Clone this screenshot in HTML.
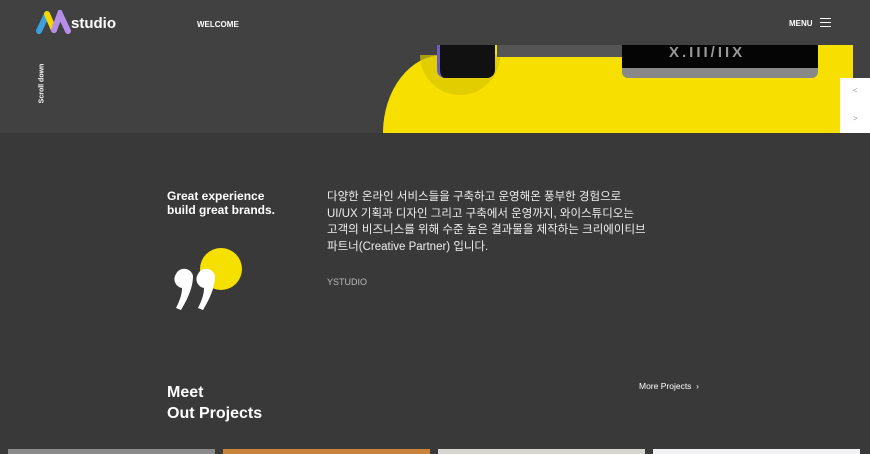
<!DOCTYPE html>
<html><head><meta charset="utf-8"><style>
*{margin:0;padding:0;box-sizing:border-box}
body{width:870px;height:454px;overflow:hidden;background:#393939;font-family:"Liberation Sans","Noto Sans CJK KR",sans-serif;color:#fff;position:relative}
.abs{position:absolute}
</style></head><body>
<div class="abs" style="left:0;top:0;width:870px;height:133px;background:#414141"></div>
<!-- hero yellow -->
<div class="abs" style="left:383px;top:55px;width:470px;height:78px;background:#f7e000;border-top-left-radius:60px 78px"></div>
<div class="abs" style="left:495px;top:45px;width:358px;height:20px;background:#f7e000"></div>
<div class="abs" style="left:420px;top:55px;width:80px;height:40px;background:#d8c400;border-radius:0 0 40px 40px;opacity:.7"></div>
<div class="abs" style="left:497px;top:45px;width:125px;height:12px;background:#555"></div>
<div class="abs" style="left:437px;top:45px;width:58px;height:33px;background:#111;border-radius:0 0 8px 8px;border-left:3px solid #6a5fc0"></div>
<div class="abs" style="left:622px;top:45px;width:196px;height:25px;background:#050505"></div>
<div class="abs" style="left:622px;top:68px;width:196px;height:10px;background:#888;border-radius:0 0 6px 6px"></div>
<div class="abs" style="left:669px;top:44px;font:bold 15px 'Liberation Sans';color:#999;letter-spacing:3px">X.III/IIX</div>
<div class="abs" style="left:840px;top:78px;width:30px;height:55px;background:#fff"></div>
<div class="abs" style="left:853px;top:86px;font-size:8px;color:#999">&lt;</div>
<div class="abs" style="left:853px;top:114px;font-size:8px;color:#999">&gt;</div>
<!-- header -->
<div class="abs" style="left:0;top:0;width:870px;height:45px;background:#414141"></div>
<svg class="abs" style="left:36px;top:10px" width="36" height="24" viewBox="0 0 36 24">
<path d="M3 21 L11 4" stroke="#3aa0e0" stroke-width="6" stroke-linecap="round"/>
<path d="M11 4 L18 20" stroke="#f5d800" stroke-width="6" stroke-linecap="round"/>
<path d="M18 20 L24 4 L32 21" stroke="#b48ee8" stroke-width="6" stroke-linecap="round" fill="none"/>
</svg>
<div class="abs" style="left:71px;top:15px;font:bold 15px 'Liberation Sans';color:#fff">studio</div>
<div class="abs" style="left:197px;top:20px;font:bold 8px 'Liberation Sans'">WELCOME</div>
<div class="abs" style="left:789px;top:19px;font:bold 8px 'Liberation Sans'">MENU</div>
<div class="abs" style="left:820px;top:18px;width:11px;height:9px;border-top:1px solid #fff;border-bottom:1px solid #fff"></div>
<div class="abs" style="left:820px;top:22px;width:11px;height:1px;background:#fff"></div>
<div class="abs" style="left:12px;top:80px;width:60px;text-align:center;white-space:nowrap;font:bold 7px 'Liberation Sans';transform:rotate(-90deg)">Scroll down</div>
<!-- section -->
<div class="abs" style="left:167px;top:189px;font:bold 12px/14px 'Liberation Sans'">Great experience<br>build great brands.</div>
<div class="abs" style="left:200px;top:248px;width:42px;height:42px;border-radius:50%;background:#f5e000"></div>
<svg class="abs" style="left:174px;top:264px" width="46" height="48" viewBox="0 0 46 48">
<path d="M2 10 a9 9 0 0 1 17 2 c0 12 -6 24 -12 34 l-5 -2 c4 -8 6 -14 6 -20 a9 9 0 0 1 -6 -14z" fill="#fff"/>
<path d="M24 10 a9 9 0 0 1 17 2 c0 12 -6 24 -12 34 l-5 -2 c4 -8 6 -14 6 -20 a9 9 0 0 1 -6 -14z" fill="#fff"/>
</svg>
<div class="abs" style="left:327px;top:189px;font-size:11.5px;line-height:16.5px;color:#eee">다양한 온라인 서비스들을 구축하고 운영해온 풍부한 경험으로<br>UI/UX 기획과 디자인 그리고 구축에서 운영까지, 와이스튜디오는<br>고객의 비즈니스를 위해 수준 높은 결과물을 제작하는 크리에이티브<br>파트너(Creative Partner) 입니다.</div>
<div class="abs" style="left:327px;top:277px;font-size:9px;color:#bbb">YSTUDIO</div>
<div class="abs" style="left:167px;top:382px;font:bold 16px/21px 'Liberation Sans'">Meet<br>Out Projects</div>
<div class="abs" style="left:639px;top:381px;font-size:8.5px">More Projects &nbsp;›</div>
<div class="abs" style="left:8px;top:449px;width:207px;height:5px;background:#8a8a8a"></div>
<div class="abs" style="left:223px;top:449px;width:207px;height:5px;background:#c9833a"></div>
<div class="abs" style="left:438px;top:449px;width:207px;height:5px;background:#d8d6d0"></div>
<div class="abs" style="left:653px;top:449px;width:207px;height:5px;background:#f2f2f4"></div>
</body></html>
